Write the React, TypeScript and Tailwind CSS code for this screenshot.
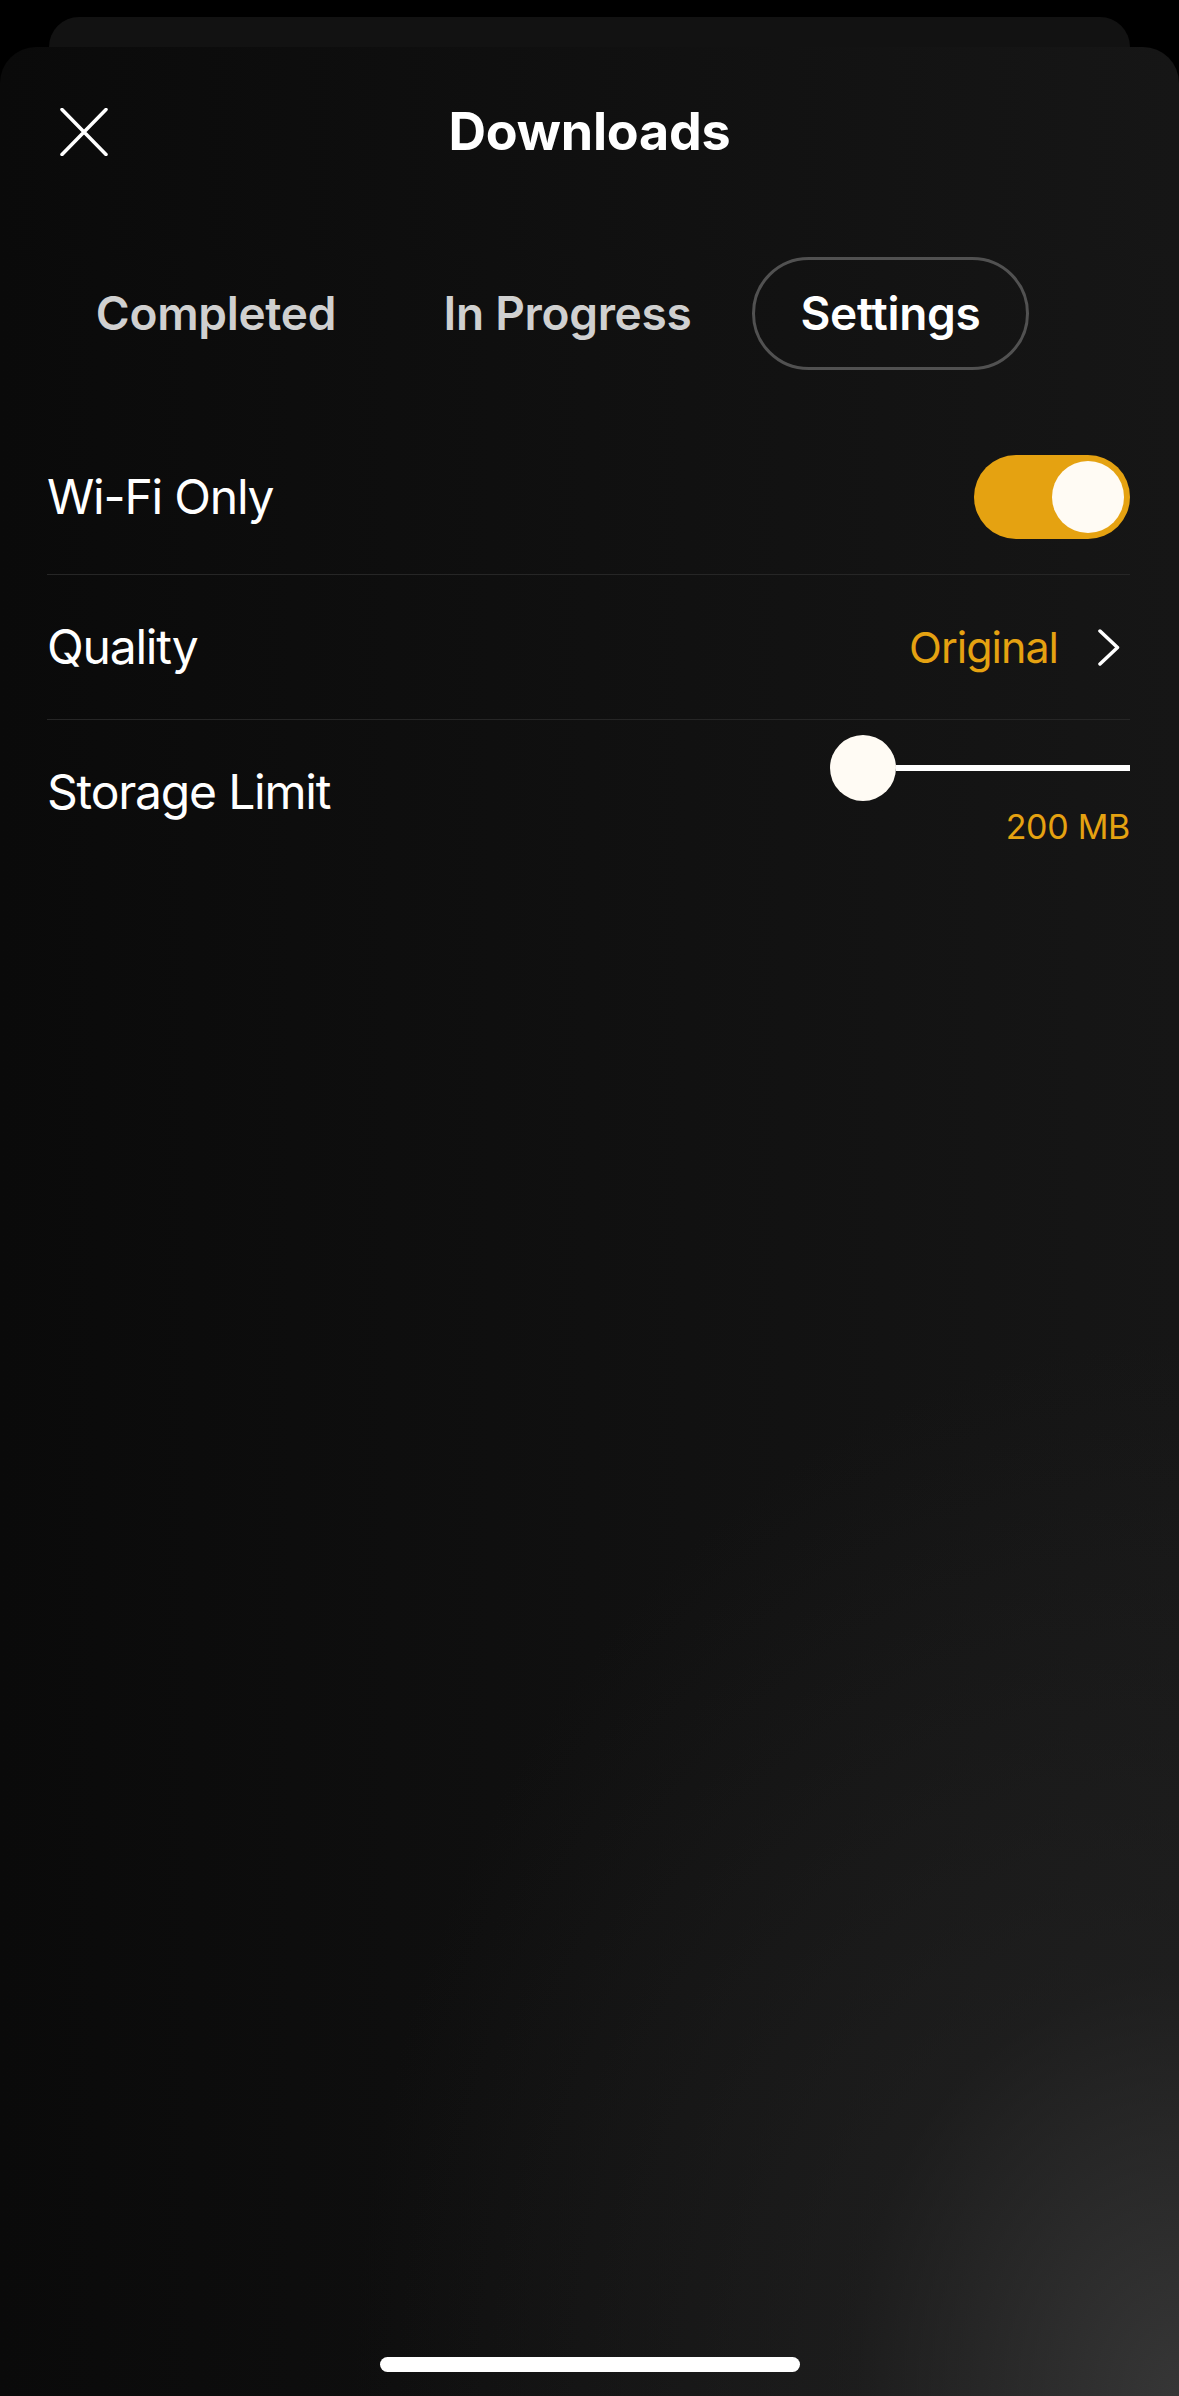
import React from 'react';

const TABS = [
  { id: 'completed', label: 'Completed', width: 'w-[334px]' },
  { id: 'progress', label: 'In Progress', width: 'w-[337px]' },
  { id: 'settings', label: 'Settings', width: 'w-[277px]' },
];

function CloseIcon() {
  return (
    <svg width="48" height="48" viewBox="0 0 48 48" fill="none">
      <path d="M2 1.5 L46 46.5 M46 1.5 L2 46.5" stroke="white" strokeWidth="3.5" strokeLinecap="round" />
    </svg>
  );
}

function ChevronRight() {
  return (
    <svg width="22" height="37" viewBox="0 0 22 37" fill="none">
      <path d="M2 2 L19.5 18.5 L2 35" stroke="white" strokeWidth="3.5" strokeLinecap="round" strokeLinejoin="round" />
    </svg>
  );
}

function Toggle({ on }: { on: boolean }) {
  return (
    <div
      className={`w-[156px] h-[84px] rounded-full flex items-center px-[6px] ${
        on ? 'bg-[#e5a211] justify-end' : 'bg-[#3a3a3a] justify-start'
      }`}
    >
      <div className="w-[72px] h-[72px] rounded-full bg-[#fffbf4]" />
    </div>
  );
}

export default function App() {
  const activeTab = 'settings';

  return (
    <div
      className="w-[1179px] h-[2396px] bg-black flex flex-col overflow-hidden"
      style={{ fontFamily: 'Inter, "Noto Sans", sans-serif' }}
    >
      {/* stacked sheet behind */}
      <div className="mt-[17px] mx-[49px] h-[30px] rounded-t-[30px] bg-[#121212]" />

      {/* Sheet */}
      <div className="flex-1 flex flex-col rounded-t-[36px] bg-[radial-gradient(ellipse_70%_45%_at_100%_100%,rgba(60,60,60,0.85)_0%,rgba(40,40,40,0.45)_40%,transparent_100%),linear-gradient(to_right,#0a0a0a,#161616)]">
        {/* Header */}
        <div className="h-[170px] flex items-center relative px-[60px]">
          <button className="w-[48px] h-[48px] flex items-center justify-center">
            <CloseIcon />
          </button>
          <h1 className="absolute left-0 right-0 text-center text-[52px] font-bold text-white pointer-events-none tracking-[-0.2px]">
            Downloads
          </h1>
        </div>

        {/* Tabs */}
        <div className="mt-[40px] pl-[49px] flex gap-[16px]">
          {TABS.map((tab) => (
            <div
              key={tab.id}
              className={`${tab.width} h-[113px] rounded-full flex items-center justify-center text-[46px] font-semibold tracking-[-0.3px] ${
                activeTab === tab.id ? 'border-[3px] border-[#515151] text-white' : 'text-[#d0d0d0]'
              }`}
            >
              {tab.label}
            </div>
          ))}
        </div>

        {/* Settings rows */}
        <div className="mt-[49px] pl-[47px] pr-[49px] flex flex-col">
          <div className="h-[156px] flex items-center justify-between border-b border-[#262626]">
            <span className="text-[48px] tracking-[-1.2px] text-white">Wi-Fi Only</span>
            <Toggle on />
          </div>

          <div className="h-[145px] flex items-center justify-between border-b border-[#262626]">
            <span className="text-[48px] tracking-[-1.2px] text-white">Quality</span>
            <div className="flex items-center gap-[40px] mr-[10px]">
              <span className="text-[43px] tracking-[-1px] text-[#e5a211]">Original</span>
              <ChevronRight />
            </div>
          </div>

          <div className="pt-[15px] flex items-center justify-between">
            <span className="text-[48px] tracking-[-1.2px] text-white">Storage Limit</span>
            <div className="w-[300px] flex flex-col items-end">
              <div className="w-full h-[66px] flex items-center">
                <div className="w-[66px] h-[66px] rounded-full bg-[#fffbf4] shrink-0" />
                <div className="flex-1 h-[6px] bg-white" />
              </div>
              <span className="mt-[4px] text-[34px] leading-[44px] tracking-[-0.3px] text-[#e5a211]">200 MB</span>
            </div>
          </div>
        </div>

        {/* Home indicator */}
        <div className="mt-auto mb-[24px] mx-auto w-[420px] h-[15px] rounded-full bg-white" />
      </div>
    </div>
  );
}
